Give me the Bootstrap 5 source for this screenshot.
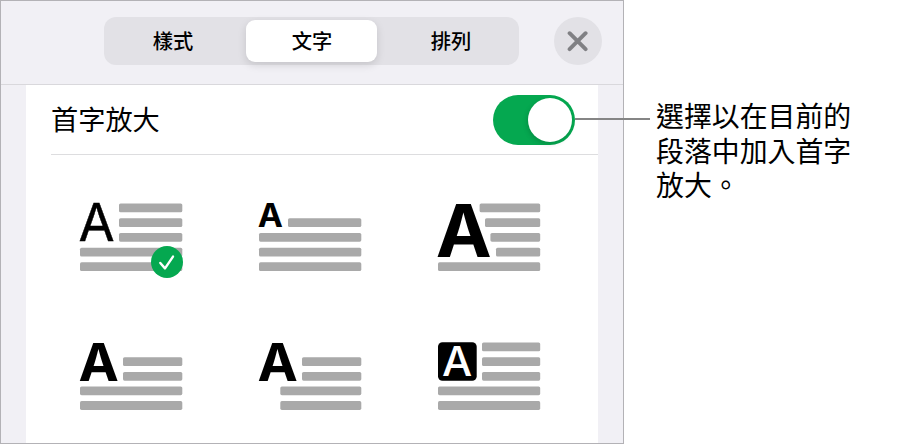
<!DOCTYPE html>
<html lang="zh-Hant">
<head>
  <meta charset="UTF-8" />
  <meta name="viewport" content="width=device-width, initial-scale=1.0" />
  <title>首字放大</title>
  <link href="https://cdn.jsdelivr.net/npm/bootstrap@5.3.0/dist/css/bootstrap.min.css" rel="stylesheet" />
  <style>
    :root {
      --panel-bg: #f1f0f5;
      --track: #e2e1e6;
      --green: #05a850;
      --bar: #a9a9a9;
    }

    body {
      font-family: "Noto Sans CJK TC", sans-serif;
      color: #000;
      background: #fff;
      height: 444px;
      overflow: hidden;
    }

    .format-panel {
      width: 624px;
      height: 444px;
      background: var(--panel-bg);
      border: 1px solid #b3b2b6;
    }

    .panel-head {
      height: 84px;
      padding: 16px 20.5px 0 103px;
      border-bottom: 1px solid #d9d8dc;
    }

    .segments {
      width: 415px;
      height: 48px;
      padding: 3px;
      border-radius: 12px;
      background: var(--track);
    }

    .segments .nav-link {
      height: 42px;
      padding: 0;
      border-radius: 9px;
      color: #000;
      font-size: 20.3px;
      font-weight: 500;
      line-height: 41px;
      text-align: center;
    }

    .segments .nav-link.active {
      width: 131px;
      padding-left: 1px;
      background: #fff;
      color: #000;
      box-shadow: 0 3px 8px rgba(0, 0, 0, 0.13);
    }

    .segments .seg-left {
      width: 139px;
      padding-right: 7px;
    }

    .segments .seg-right {
      width: 139px;
      padding-left: 9px;
    }

    .close-btn {
      width: 48px;
      height: 48px;
      margin-right: 0.5px;
      background: var(--track);
    }

    .panel-body {
      width: 572px;
      height: 358px;
      margin-left: 25px;
    }

    .switch-row {
      height: 70px;
      margin-left: 25px;
      padding-right: 23px;
      border-bottom: 1px solid #dddddf;
      font-size: 27.2px;
      line-height: 1;
    }

    .switch-row span {
      padding-bottom: 1px;
    }

    .toggle {
      width: 82px;
      height: 50px;
      padding: 3px;
      background: var(--green);
    }

    .toggle-knob {
      width: 44px;
      height: 44px;
      box-shadow: -1px 2px 5px rgba(0, 0, 0, 0.15);
    }

    .cap-grid {
      display: grid;
      grid-template-columns: repeat(3, 179px);
      grid-template-rows: 139px 68px;
      padding: 48px 0 0 54px;
    }

    .cap-grid svg {
      overflow: visible;
      fill: var(--bar);
    }

    .cap-grid text {
      fill: #000;
      font-family: Inter, sans-serif;
      font-weight: 700;
    }

    .cap-grid .thin-cap {
      font-weight: 400;
      stroke: #000;
      stroke-width: 0.4;
    }

    .cap-grid .boxed-cap {
      fill: #fff;
      font-weight: 500;
    }

    .callout-line {
      width: 75px;
      height: 2.4px;
      margin: 117.6px 6px 0 -49px;
      background: #858585;
      z-index: 1;
    }

    .callout-text {
      width: 200px;
      padding-top: 98px;
      font-size: 27.9px;
      line-height: 34.5px;
    }
  </style>
</head>
<body>

<div class="d-flex">
  <div class="format-panel flex-shrink-0">
    <!-- Tabs -->
    <div class="panel-head d-flex justify-content-between">
      <nav class="segments nav nav-pills flex-nowrap">
        <a class="nav-link seg-left" href="#">樣式</a>
        <a class="nav-link active" href="#">文字</a>
        <a class="nav-link seg-right" href="#">排列</a>
      </nav>
      <button type="button" class="close-btn btn rounded-circle border-0 p-0 d-flex align-items-center justify-content-center" aria-label="關閉">
        <svg width="22" height="22" viewBox="0 0 22 22" fill="none" stroke="#808084" stroke-width="3.9" stroke-linecap="round">
          <path d="M2.6 3.2L18.6 19.2M18.6 3.2L2.6 19.2" />
        </svg>
      </button>
    </div>

    <div class="panel-body bg-white">
      <div class="switch-row d-flex align-items-center justify-content-between">
        <span>首字放大</span>
        <div class="toggle rounded-pill d-flex justify-content-end" role="switch" aria-checked="true">
          <div class="toggle-knob rounded-circle bg-white"></div>
        </div>
      </div>

      <!-- Drop cap styles -->
      <div class="cap-grid">
        <svg width="102" height="68">
          <text class="thin-cap" x="-1.6" y="38.3" font-size="52.5" textLength="36.2" lengthAdjust="spacingAndGlyphs">A</text>
          <rect x="39" y="0.5" width="63.3" height="8.8" rx="1.6" />
          <rect x="39" y="15.2" width="63.3" height="8.8" rx="1.6" />
          <rect x="39" y="29.9" width="63.3" height="8.8" rx="1.6" />
          <rect x="0" y="44.7" width="102.3" height="8.8" rx="1.6" />
          <rect x="0" y="59.3" width="102.3" height="8.8" rx="1.6" />
          <circle cx="87" cy="59" r="16" fill="#05a850" />
          <path d="M80.3 60L85 65.4L93 53.6" fill="none" stroke="#fff" stroke-width="2.4" stroke-linecap="round" stroke-linejoin="round" />
        </svg>
        <svg width="102" height="68">
          <text x="-1.2" y="24" font-size="32.5" textLength="25.2" lengthAdjust="spacingAndGlyphs">A</text>
          <rect x="29" y="15.2" width="73.3" height="8.8" rx="1.6" />
          <rect x="0" y="29.9" width="102.3" height="8.8" rx="1.6" />
          <rect x="0" y="44.7" width="102.3" height="8.8" rx="1.6" />
          <rect x="0" y="59.3" width="102.3" height="8.8" rx="1.6" />
        </svg>
        <svg width="102" height="68">
          <text x="-2.3" y="53.5" font-size="73" textLength="56" lengthAdjust="spacingAndGlyphs">A</text>
          <rect x="41.6" y="0.5" width="60.6" height="8.8" rx="1.6" />
          <rect x="47" y="15.2" width="55.2" height="8.8" rx="1.6" />
          <rect x="52.4" y="29.9" width="49.8" height="8.8" rx="1.6" />
          <rect x="58" y="44.7" width="44.2" height="8.8" rx="1.6" />
          <rect x="0" y="59.3" width="102.2" height="8.8" rx="1.6" />
        </svg>
        <svg width="102" height="68">
          <text x="-1.6" y="38.6" font-size="52.5" textLength="40.4" lengthAdjust="spacingAndGlyphs">A</text>
          <rect x="43" y="15.2" width="59.3" height="8.8" rx="1.6" />
          <rect x="43" y="29.9" width="59.3" height="8.8" rx="1.6" />
          <rect x="0" y="44.4" width="102.3" height="8.8" rx="1.6" />
          <rect x="0" y="59.1" width="102.3" height="8.8" rx="1.6" />
        </svg>
        <svg width="102" height="68">
          <text x="-1.6" y="38.6" font-size="52.5" textLength="40.4" lengthAdjust="spacingAndGlyphs">A</text>
          <rect x="43" y="15.2" width="59.3" height="8.8" rx="1.6" />
          <rect x="43" y="29.9" width="59.3" height="8.8" rx="1.6" />
          <rect x="21.3" y="44.4" width="81" height="8.8" rx="1.6" />
          <rect x="21.3" y="59.1" width="81" height="8.8" rx="1.6" />
        </svg>
        <svg width="102" height="68">
          <rect x="0" y="0.2" width="38.7" height="38.5" rx="4.5" fill="#000" />
          <text class="boxed-cap" x="4.1" y="33.6" font-size="40.5" textLength="30.2" lengthAdjust="spacingAndGlyphs">A</text>
          <rect x="44" y="0.5" width="58.2" height="8.8" rx="1.6" />
          <rect x="44" y="15.2" width="58.2" height="8.8" rx="1.6" />
          <rect x="44" y="29.9" width="58.2" height="8.8" rx="1.6" />
          <rect x="0" y="44.4" width="102.2" height="8.8" rx="1.6" />
          <rect x="0" y="59.1" width="102.2" height="8.8" rx="1.6" />
        </svg>
      </div>
    </div>
  </div>

  <!-- Callout -->
  <div class="callout-line flex-shrink-0"></div>
  <div class="callout-text flex-shrink-0">選擇以在目前的段落中加入首字放大。</div>
</div>

<script src="https://cdn.jsdelivr.net/npm/bootstrap@5.3.0/dist/js/bootstrap.bundle.min.js"></script>
</body>
</html>
